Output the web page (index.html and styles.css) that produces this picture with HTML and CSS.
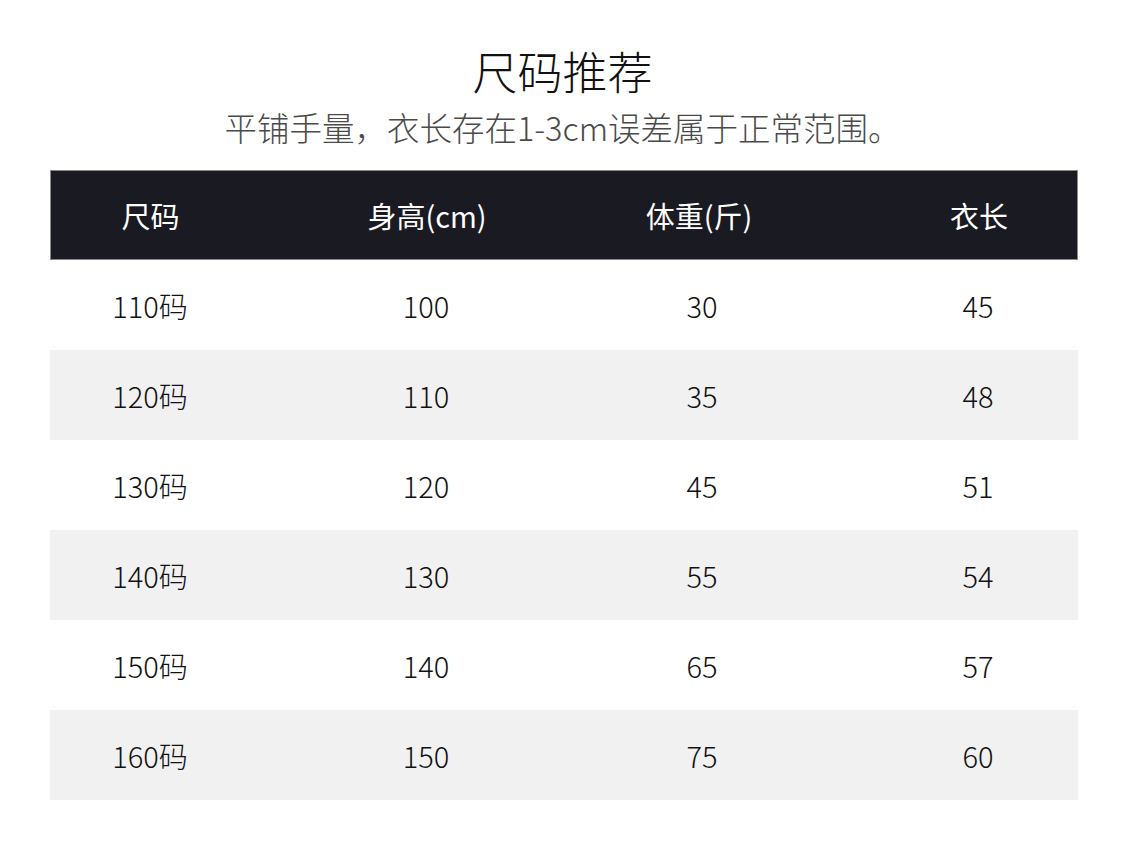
FILE: index.html
```html
<!DOCTYPE html>
<html lang="zh-CN">
<head>
<meta charset="utf-8">
<title>尺码推荐</title>
<link rel="stylesheet" href="styles.css">
</head>
<body>
<div class="page">
  <h1 class="title">尺码推荐</h1>
  <p class="subtitle">平铺手量，衣长存在1-3cm误差属于正常范围。</p>
  <div class="table">
    <div class="row head">
      <div class="cell">尺码</div><div class="cell">身高(cm)</div><div class="cell shift">体重(斤)</div><div class="cell">衣长</div>
    </div>
    <div class="row"><div class="cell">110码</div><div class="cell">100</div><div class="cell">30</div><div class="cell">45</div></div>
    <div class="row alt"><div class="cell">120码</div><div class="cell">110</div><div class="cell">35</div><div class="cell">48</div></div>
    <div class="row"><div class="cell">130码</div><div class="cell">120</div><div class="cell">45</div><div class="cell">51</div></div>
    <div class="row alt"><div class="cell">140码</div><div class="cell">130</div><div class="cell">55</div><div class="cell">54</div></div>
    <div class="row"><div class="cell">150码</div><div class="cell">140</div><div class="cell">65</div><div class="cell">57</div></div>
    <div class="row alt"><div class="cell">160码</div><div class="cell">150</div><div class="cell">75</div><div class="cell">60</div></div>
  </div>
</div>
</body>
</html>
```

FILE: styles.css
```css
* { box-sizing: border-box; }
html, body { margin: 0; padding: 0; background: #ffffff; }
body {
  font-family: "Noto Sans CJK SC", "Noto Sans", sans-serif;
  font-weight: 300;
  color: #111111;
}
.page {
  width: 1125px;
  padding-top: 41px;
}
.title {
  margin: 0;
  text-align: center;
  font-size: 45px;
  font-weight: 300;
  line-height: 60px;
  color: #111111;
}
.subtitle {
  margin: 4px 0 0;
  text-align: center;
  font-size: 32.5px;
  font-weight: 300;
  line-height: 44px;
  color: #4a4a4a;
}
.table {
  margin: 21px 0 0 50px;
  width: 1028px;
}
.row {
  display: grid;
  grid-template-columns: repeat(4, 200px);
  column-gap: 76px;
  height: 90px;
  align-items: center;
}
.row.alt { background: #f1f1f1; }
.row.head {
  background: #1a1a22;
  border: 1px solid #8a8a8a;
  color: #ffffff;
  font-weight: 400;
}
.head .cell:first-child { margin-left: -1px; }
.head .cell.shift { margin-left: -8px; }
.cell {
  text-align: center;
  font-size: 29px;
  line-height: 40px;
}
```
